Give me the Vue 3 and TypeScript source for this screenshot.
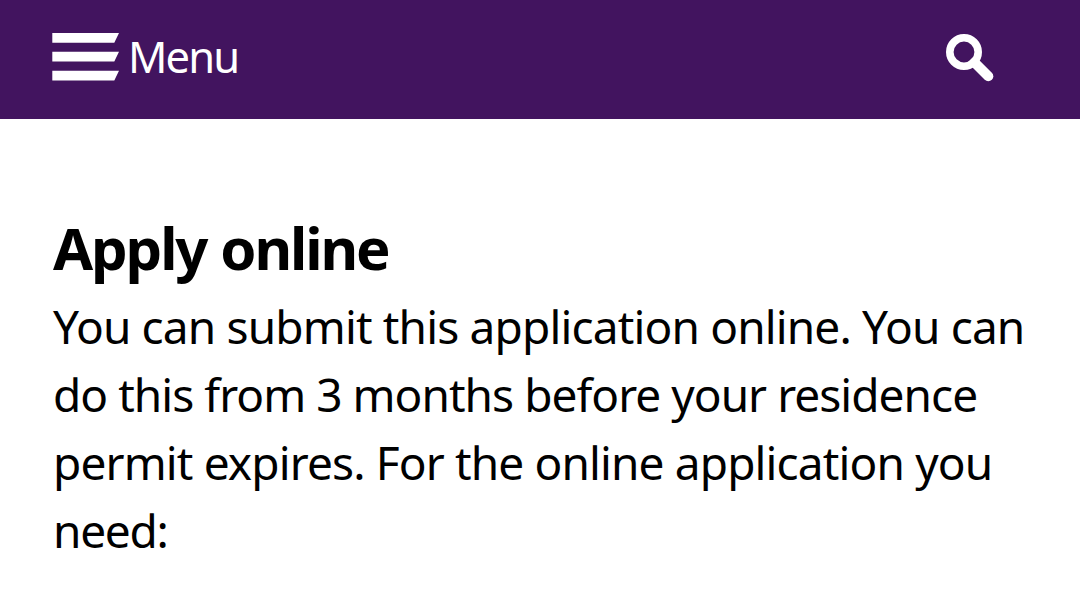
<template>
  <div class="page">
    <header class="header">
      <button class="header__menu" type="button">
        <svg class="header__bars" viewBox="0 0 67 48" aria-hidden="true">
          <path d="M0.3 0H67L62.3 9.7H0.3ZM0.3 18.8H67L62.3 28.5H0.3ZM0.3 37.8H67L62.3 47.5H0.3Z" />
        </svg>
        <span class="header__label">Menu</span>
      </button>
      <button class="header__search" type="button" aria-label="Search">
        <svg viewBox="0 0 48 48" aria-hidden="true">
          <circle cx="18" cy="18" r="14.2" />
          <path d="M28.5 28.5L42.3 42.3" />
        </svg>
      </button>
    </header>

    <main class="content">
      <h2 class="content__title">Apply online</h2>
      <p class="content__text">
        <span
          v-for="line in lines"
          :key="line.text"
          class="content__line"
          :style="{ letterSpacing: `${line.spacing}px` }"
        >{{ line.text }}</span>
      </p>
    </main>
  </div>
</template>

<script setup lang="ts">
interface Line {
  text: string
  spacing: number
}

const lines: Line[] = [
  { text: 'You can submit this application online. You can', spacing: -0.84 },
  { text: 'do this from 3 months before your residence', spacing: -0.96 },
  { text: 'permit expires. For the online application you', spacing: -0.86 },
  { text: 'need:', spacing: -1.3 }
]
</script>

<style>
body {
  margin: 0;
  background: #fff;
}
</style>

<style scoped>
.page {
  height: 602px;
  overflow: hidden;
  background: #fff;
  color: #000;
  font-family: 'Noto Sans', sans-serif;
}

.header {
  display: flex;
  align-items: center;
  justify-content: space-between;
  box-sizing: border-box;
  height: 119px;
  padding: 0 86px 6px 52px;
  background: #42145f;
}

.header__menu,
.header__search {
  display: flex;
  align-items: center;
  padding: 0;
  border: 0;
  background: none;
  color: #fff;
  font: inherit;
}

.header__menu {
  gap: 9px;
}

.header__bars {
  width: 67px;
  height: 48px;
  fill: currentColor;
}

.header__label {
  padding-bottom: 1px;
  font-size: 43.5px;
  line-height: 60px;
  letter-spacing: -1.9px;
}

.header__search svg {
  width: 48px;
  height: 48px;
  margin-top: 2px;
  fill: none;
  stroke: currentColor;
  stroke-width: 7.6;
}

.header__search path {
  stroke-width: 10;
  stroke-linecap: round;
}

.content {
  padding: 95px 0 0 53px;
}

.content__title {
  margin: 0 0 10px;
  font-size: 58px;
  font-weight: 700;
  line-height: 68px;
  letter-spacing: -2.1px;
  word-spacing: 1px;
}

.content__text {
  margin: 0;
  font-size: 46px;
  line-height: 68px;
}

.content__line {
  display: block;
  white-space: nowrap;
}
</style>
